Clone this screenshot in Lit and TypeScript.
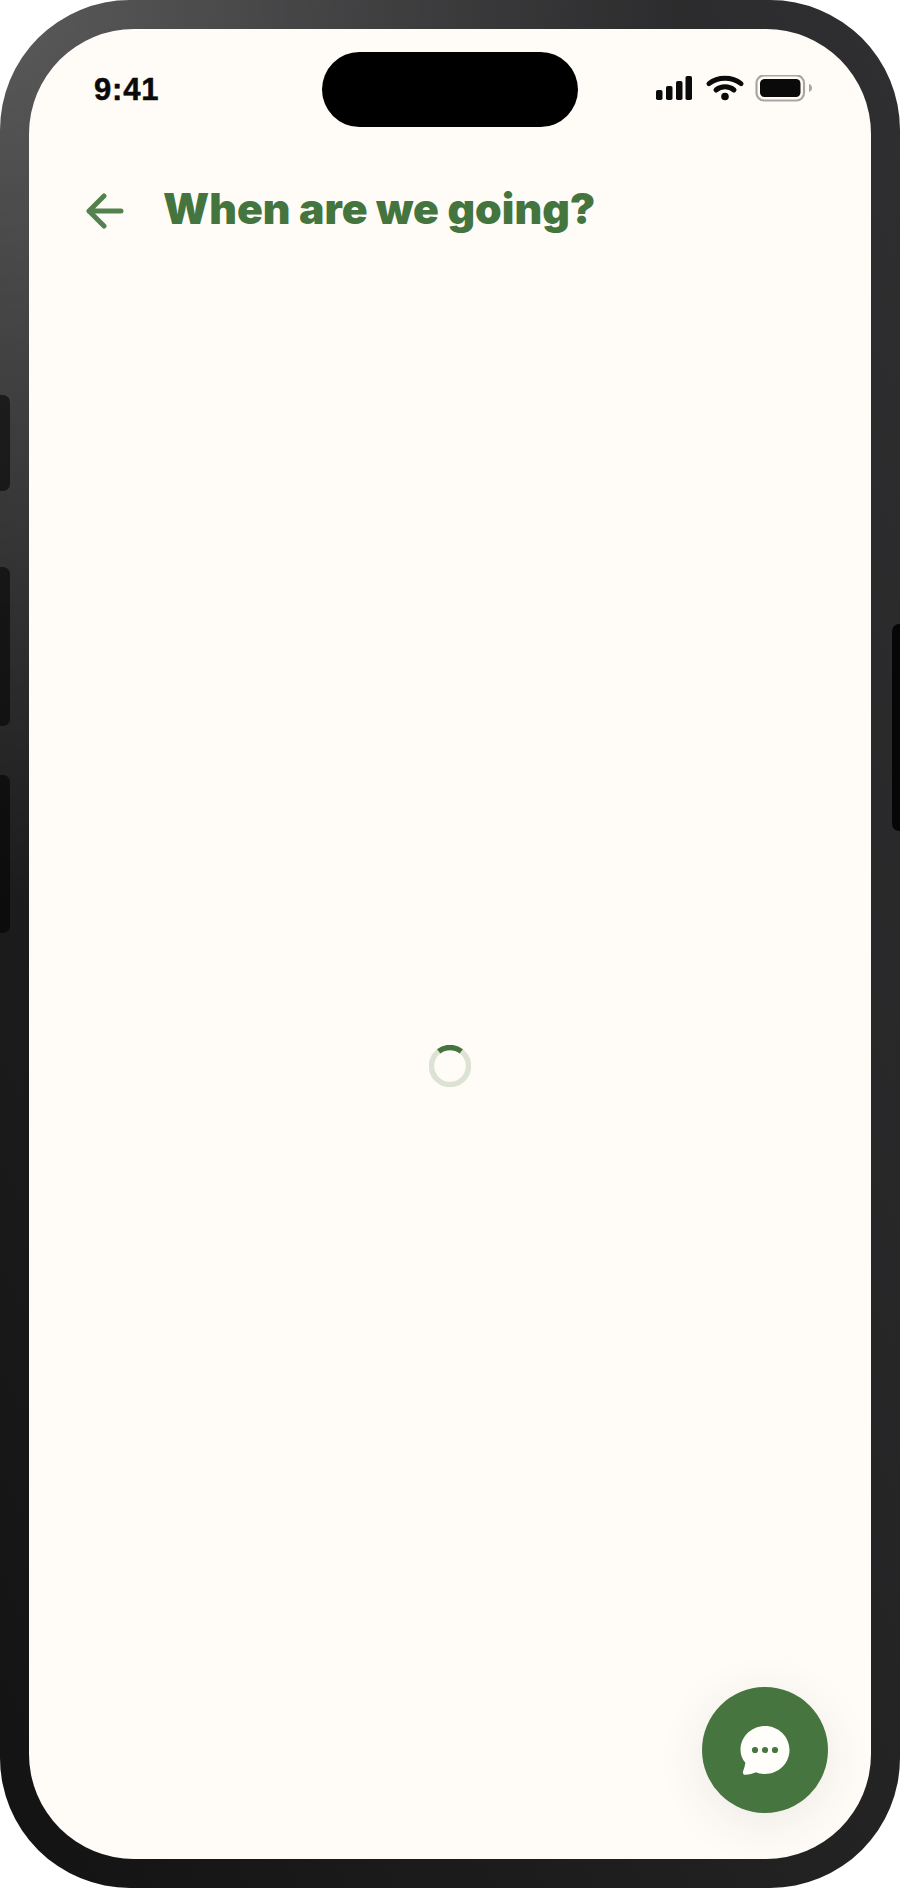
import { LitElement, html, css } from "lit";
import { customElement } from "lit/decorators.js";

@customElement("app-root")
export class AppRoot extends LitElement {
  static styles = css`
    :host { display: block; width: 900px; height: 1888px; background: #fff; overflow: hidden; }
    .phone {
      position: relative; box-sizing: border-box; width: 900px; height: 1888px; padding: 29px;
      border-radius: 130px; display: flex;
      background:
        radial-gradient(ellipse 680px 900px at 0 0, rgba(255,255,255,.25), rgba(255,255,255,0) 100%),
        linear-gradient(to bottom left, #2f2f31 0%, #232324 50%, #131313 100%);
    }
    .btn { position: absolute; width: 10px; left: 0; background: rgba(0,0,0,.55); border-radius: 0 7px 7px 0; }
    .b1 { top: 395px; height: 96px; }
    .b2 { top: 567px; height: 159px; }
    .b3 { top: 775px; height: 158px; }
    .b4 { left: auto; right: 0; top: 624px; height: 207px; width: 8px; background: rgba(0,0,0,.85); border-radius: 7px 0 0 7px; }
    .screen {
      position: relative; flex: 1; display: flex; flex-direction: column; overflow: hidden;
      background: #fffcf8; border-radius: 105px;
    }
    .status {
      display: grid; grid-template-columns: 1fr 256px 1fr; align-items: center;
      box-sizing: border-box; height: 98px; padding-top: 23px;
    }
    .time {
      padding-left: 65px; font: 700 31px/1 "Liberation Sans", Arial, sans-serif; color: #0a0a0a;
      -webkit-text-stroke: 0.5px #0a0a0a; letter-spacing: 0.8px;
    }
    .island { height: 75px; background: #000; border-radius: 37.5px; }
    .icons { display: flex; justify-content: flex-end; padding-right: 59px; }
    .icons svg { display: block; position: relative; top: -1px; }
    .header {
      display: flex; align-items: center; gap: 39px; box-sizing: border-box;
      height: 60px; margin-top: 54px; padding-left: 57px;
    }
    .header svg { display: block; flex: none; }
    .title {
      margin: 0; font: 900 42.7px/60px Inter, "Liberation Sans", sans-serif; color: #44753f;
      white-space: nowrap; position: relative; top: -2px;
    }
    .content { flex: 1; display: flex; align-items: center; justify-content: center; padding-top: 32px; }
    .content svg { display: block; }
    .fab {
      position: absolute; right: 43px; bottom: 46px; width: 126px; height: 126px; border-radius: 50%;
      background: #47753f; display: flex; align-items: center; justify-content: center;
      box-shadow: 0 10px 50px rgba(60,60,40,.09);
    }
    .fab svg { display: block; }
  `;

  render() {
    return html`
      <div class="phone">
        <div class="btn b1"></div>
        <div class="btn b2"></div>
        <div class="btn b3"></div>
        <div class="btn b4"></div>
        <div class="screen">
          <div class="status">
            <div class="time">9:41</div>
            <div class="island"></div>
            <div class="icons">
              <svg width="156" height="28" viewBox="0 0 156 28">
                <g fill="#0a0a0a">
                  <rect x="0" y="15" width="6.5" height="10" rx="1.8"/>
                  <rect x="10" y="11" width="6.5" height="14" rx="1.8"/>
                  <rect x="20" y="6" width="6.5" height="19" rx="1.8"/>
                  <rect x="29.500" y="1" width="6.5" height="24" rx="1.8"/>
                  <circle cx="69" cy="21.500" r="3.800"/>
                </g>
                <g fill="none" stroke="#0a0a0a" stroke-width="5" stroke-linecap="round">
                  <path d="M53 8.600 C 62 1.500, 76 1.500, 85 8.600"/>
                  <path d="M60 15 C 65 10.800, 73 10.800, 78 15"/>
                </g>
                <rect x="100.500" y="0.500" width="47.500" height="25" rx="7.500" fill="none" stroke="#a8a6a0" stroke-width="2.200"/>
                <rect x="104" y="4" width="40.500" height="18" rx="4.500" fill="#0a0a0a"/>
                <path d="M153 9 C 155 9.600 156 11.200 156 13 C 156 14.800 155 16.400 153 17 Z" fill="#a8a6a0"/>
              </svg>
            </div>
          </div>
          <div class="header">
            <svg width="38" height="36" viewBox="0 0 38 36">
              <path d="M35 18 H3 M18 3 L3 18 L18 33" fill="none" stroke="#54824e" stroke-width="5" stroke-linecap="round" stroke-linejoin="round"/>
            </svg>
            <h1 class="title">When are we going?</h1>
          </div>
          <div class="content">
            <svg width="42" height="42" viewBox="0 0 42 42">
              <circle cx="21" cy="21" r="18.500" fill="none" stroke="#dde3d4" stroke-width="5.500"/>
              <path d="M9.700 6.400 A 18.500 18.500 0 0 1 32.300 6.400" fill="none" stroke="#44753f" stroke-width="5.500"/>
            </svg>
          </div>
          <div class="fab">
            <svg width="52" height="52" viewBox="0 0 52 52">
              <path d="M26 2 C39.500 2 50.500 12.800 50.500 26 C50.500 39.200 39.500 50 26 50 C22.500 50 19.800 49.400 17 48.200 C13.500 49.700 10 50.500 6.500 50.700 C4.500 50.700 3.500 49.300 4 47.500 C5.200 44.500 6 41.500 6.400 38.800 C3.200 35.200 1.500 30.600 1.500 26 C1.500 12.800 12.500 2 26 2 Z" fill="#fffefb"/>
              <circle cx="16" cy="26" r="3.100" fill="#47753f"/>
              <circle cx="26" cy="26" r="3.100" fill="#47753f"/>
              <circle cx="36" cy="26" r="3.100" fill="#47753f"/>
            </svg>
          </div>
        </div>
      </div>
    `;
  }
}
